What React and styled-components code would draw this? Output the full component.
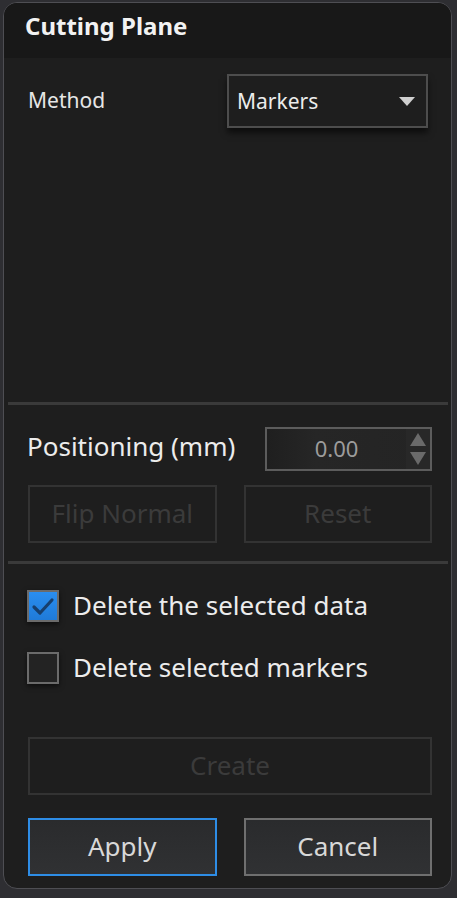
import React from 'react'
import styled, { createGlobalStyle } from 'styled-components'

const Global = createGlobalStyle`
  body {
    margin: 0;
    background: #2e2e32;
    font-family: "Noto Sans", "Open Sans", sans-serif;
  }
`

function App() {
  return (
    <>
      <Global />
      <S.Panel>
        <S.Header>Cutting Plane</S.Header>
        <S.Body>
          <S.MethodRow>
            <S.Label>Method</S.Label>
            <S.Select>
              <span>Markers</span>
              <S.Caret />
            </S.Select>
          </S.MethodRow>
          <S.Spacer />
          <S.Separator />
          <S.PosRow>
            <S.BigLabel raise={7}>Positioning (mm)</S.BigLabel>
            <S.Spin>
              <S.SpinValue>0.00</S.SpinValue>
              <S.SpinArrows>
                <S.Tri up />
                <S.Tri />
              </S.SpinArrows>
            </S.Spin>
          </S.PosRow>
          <S.ButtonRow top={14}>
            <S.Button disabled>Flip Normal</S.Button>
            <S.Button disabled>Reset</S.Button>
          </S.ButtonRow>
          <S.Separator top={18} />
          <S.Check top={26}>
            <S.Box checked>
              <svg width="24" height="20" viewBox="0 0 24 20">
                <path d="M3 11 L9 17 L21 4" fill="none" stroke="#173f6e" strokeWidth="3.2" strokeLinecap="round" strokeLinejoin="round" />
              </svg>
            </S.Box>
            <S.BigLabel raise={3}>Delete the selected data</S.BigLabel>
          </S.Check>
          <S.Check top={30}>
            <S.Box />
            <S.BigLabel raise={3}>Delete selected markers</S.BigLabel>
          </S.Check>
          <S.ButtonRow top={53}>
            <S.Button disabled>Create</S.Button>
          </S.ButtonRow>
          <S.ButtonRow top={23}>
            <S.Button primary>Apply</S.Button>
            <S.Button>Cancel</S.Button>
          </S.ButtonRow>
        </S.Body>
      </S.Panel>
    </>
  )
}

const S = {}

S.Panel = styled.div`
  box-sizing: border-box;
  margin: 2px 0 0 3px;
  width: 449px;
  height: 887px;
  border: 1px solid #4e4e53;
  border-radius: 14px;
  overflow: hidden;
  display: flex;
  flex-direction: column;
  background: #1e1e1e;
`

S.Header = styled.div`
  height: 55px;
  flex: none;
  box-sizing: border-box;
  padding: 6px 0 0 21px;
  background: #181818;
  color: #f2f2f2;
  font-size: 24px;
  font-weight: 700;
  line-height: 34px;
`

S.Body = styled.div`
  flex: 1;
  display: flex;
  flex-direction: column;
  padding: 0 19px 12px 23px;
`

S.MethodRow = styled.div`
  display: flex;
  align-items: center;
  justify-content: space-between;
  margin-top: 16px;
  padding-left: 1px;
  margin-right: 4px;
`

S.Label = styled.div`
  color: #e6e6e6;
  font-size: 21px;
  padding-bottom: 2px;
`

S.BigLabel = styled.div`
  color: #ececec;
  font-size: 26px;
  line-height: 26px;
  white-space: nowrap;
  padding-bottom: ${p => p.raise || 0}px;
`

S.Select = styled.div`
  box-sizing: border-box;
  width: 201px;
  height: 54px;
  border: 2px solid #4d4d4d;
  background: #1e1e1e;
  box-shadow: 0 5px 6px rgba(0, 0, 0, 0.55);
  display: flex;
  align-items: center;
  justify-content: space-between;
  padding: 0 11px 0 8px;
  color: #ececec;
  font-size: 21px;
`

S.Caret = styled.div`
  width: 0;
  height: 0;
  border-left: 8px solid transparent;
  border-right: 8px solid transparent;
  border-top: 9px solid #cfcfcf;
`

S.Spacer = styled.div`
  flex: 1;
`

S.Separator = styled.div`
  height: 3px;
  background: #3a3a3a;
  margin: ${p => p.top || 0}px -16px 0 -19px;
  flex: none;
`

S.PosRow = styled.div`
  display: flex;
  align-items: center;
  justify-content: space-between;
  margin-top: 22px;
`

S.Spin = styled.div`
  box-sizing: border-box;
  width: 167px;
  height: 44px;
  border: 2px solid #5c5c5c;
  display: flex;
  background: linear-gradient(90deg, #1f1f1f, #262626 30%, #242424);
`

S.SpinValue = styled.div`
  flex: 1;
  display: flex;
  align-items: center;
  justify-content: center;
  color: #9c9c9c;
  font-size: 22px;
  padding-bottom: 2px;
`

S.SpinArrows = styled.div`
  width: 24px;
  background: #282828;
  display: flex;
  flex-direction: column;
  align-items: center;
  justify-content: center;
  gap: 6px;
`

S.Tri = styled.div`
  width: 0;
  height: 0;
  border-left: 8px solid transparent;
  border-right: 8px solid transparent;
  ${p => p.up ? 'border-bottom: 13px solid #6a6a6a;' : 'border-top: 13px solid #6a6a6a;'}
`

S.ButtonRow = styled.div`
  display: flex;
  gap: 27px;
  margin-top: ${p => p.top || 0}px;
  padding-left: 1px;
`

S.Button = styled.button`
  flex: 1;
  height: 58px;
  box-sizing: border-box;
  font-family: inherit;
  font-size: 26px;
  border: 2px solid ${p => p.primary ? '#2e8de6' : p.disabled ? '#333333' : '#6f6f6f'};
  color: ${p => p.disabled ? '#3b3b3b' : '#d8d8d8'};
  background: ${p => p.disabled ? '#1e1e1e' : 'linear-gradient(180deg, #2a2b2d, #303133)'};
  padding: 0 0 3px;
`

S.Check = styled.div`
  display: flex;
  align-items: center;
  gap: 14px;
  margin-top: ${p => p.top || 0}px;
`

S.Box = styled.div`
  box-sizing: border-box;
  width: 32px;
  height: 32px;
  border: 2px solid #6b6b6b;
  background: ${p => p.checked ? 'linear-gradient(180deg, #2a8ef0, #1f7ad8)' : '#232323'};
  box-shadow: 0 2px 5px rgba(0, 0, 0, 0.6);
  display: flex;
  align-items: center;
  justify-content: center;
`

export default App
